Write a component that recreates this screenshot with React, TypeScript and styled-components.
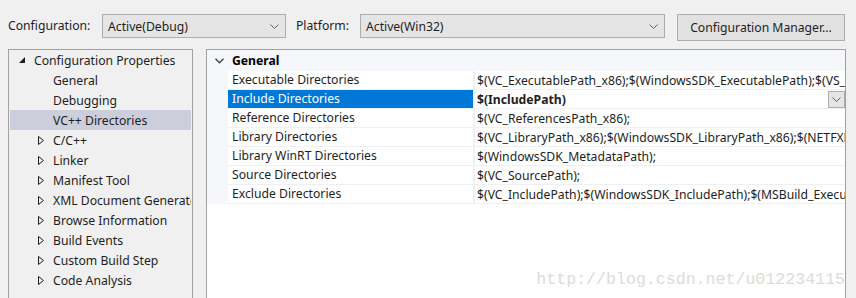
import styled, { createGlobalStyle } from "styled-components";

const GlobalStyle = createGlobalStyle`
  html, body {
    margin: 0;
    padding: 0;
    background: #f0f0f0;
    overflow: hidden;
  }
  body {
    font-family: "Noto Sans", "Liberation Sans", sans-serif;
    font-size: 12.2px;
    color: #1e1e1e;
  }
`;

interface TreeItem {
  label: string;
  level: 0 | 1;
  arrow?: "open" | "closed";
  selected?: boolean;
}

const treeItems: TreeItem[] = [
  { label: "Configuration Properties", level: 0, arrow: "open" },
  { label: "General", level: 1 },
  { label: "Debugging", level: 1 },
  { label: "VC++ Directories", level: 1, selected: true },
  { label: "C/C++", level: 1, arrow: "closed" },
  { label: "Linker", level: 1, arrow: "closed" },
  { label: "Manifest Tool", level: 1, arrow: "closed" },
  { label: "XML Document Generator", level: 1, arrow: "closed" },
  { label: "Browse Information", level: 1, arrow: "closed" },
  { label: "Build Events", level: 1, arrow: "closed" },
  { label: "Custom Build Step", level: 1, arrow: "closed" },
  { label: "Code Analysis", level: 1, arrow: "closed" },
];

const props = [
  {
    name: "Executable Directories",
    value:
      "$(VC_ExecutablePath_x86);$(WindowsSDK_ExecutablePath);$(VS_ExecutablePath);$(MSBuild_ExecutablePath)",
  },
  { name: "Include Directories", value: "$(IncludePath)", selected: true },
  { name: "Reference Directories", value: "$(VC_ReferencesPath_x86);" },
  {
    name: "Library Directories",
    value:
      "$(VC_LibraryPath_x86);$(WindowsSDK_LibraryPath_x86);$(NETFXKitsDir)Lib\\um\\x86",
  },
  { name: "Library WinRT Directories", value: "$(WindowsSDK_MetadataPath);" },
  { name: "Source Directories", value: "$(VC_SourcePath);" },
  {
    name: "Exclude Directories",
    value:
      "$(VC_IncludePath);$(WindowsSDK_IncludePath);$(MSBuild_ExecutablePath);$(VC_LibraryPath_x86)",
  },
];

const Chevron = () => (
  <svg width="9" height="5" viewBox="0 0 9 5">
    <polyline points="0.5,0.5 4.5,4.5 8.5,0.5" fill="none" stroke="#606060" strokeWidth="1" />
  </svg>
);

export default function App() {
  return (
    <>
      <GlobalStyle />
      <Page>
        <TopBar>
          <Label $width={94}>Configuration:</Label>
          <Combo $width={184}>
            <span>Active(Debug)</span>
            <Chevron />
          </Combo>
          <Label $width={64} $gap={10}>
            Platform:
          </Label>
          <Combo $width={305}>
            <span>Active(Win32)</span>
            <Chevron />
          </Combo>
          <ManagerButton>Configuration Manager...</ManagerButton>
        </TopBar>
        <Main>
          <Tree>
            {treeItems.map((item) => (
              <TreeRow key={item.label} $selected={item.selected}>
                <TreeArrow $level={item.level}>
                  {item.arrow === "open" && (
                    <svg width="6" height="6" viewBox="0 0 6 6">
                      <polygon points="6,0 6,6 0,6" fill="#1e1e1e" />
                    </svg>
                  )}
                  {item.arrow === "closed" && (
                    <svg width="6" height="9" viewBox="0 0 6 9">
                      <polygon points="0.5,0.5 5.5,4.5 0.5,8.5" fill="none" stroke="#1e1e1e" strokeWidth="1" />
                    </svg>
                  )}
                </TreeArrow>
                <TreeLabel>{item.label}</TreeLabel>
              </TreeRow>
            ))}
          </Tree>
          <Grid>
            <Section>
              <SectionHeader>
                <HeaderToggle>
                  <svg width="9" height="6" viewBox="0 0 9 6">
                    <polyline points="0.5,0.8 4.5,4.8 8.5,0.8" fill="none" stroke="#444" strokeWidth="1.4" />
                  </svg>
                </HeaderToggle>
                <HeaderTitle>General</HeaderTitle>
              </SectionHeader>
              {props.map((p) => (
                <PropRow key={p.name}>
                  <NameCell $selected={p.selected}>{p.name}</NameCell>
                  <ValueCell $bold={p.selected}>
                    <ValueText>{p.value}</ValueText>
                    {p.selected && (
                      <DropButton>
                        <Chevron />
                      </DropButton>
                    )}
                  </ValueCell>
                </PropRow>
              ))}
            </Section>
            <Watermark>http://blog.csdn.net/u012234115</Watermark>
          </Grid>
        </Main>
      </Page>
    </>
  );
}

const Page = styled.div`
  width: 856px;
  height: 298px;
  padding: 14px 0 0 8px;
  box-sizing: border-box;
`;

const TopBar = styled.div`
  display: flex;
  align-items: flex-start;
  height: 26px;
`;

const Label = styled.div<{ $width: number; $gap?: number }>`
  width: ${({ $width }) => $width}px;
  margin-left: ${({ $gap }) => $gap ?? 0}px;
  height: 24px;
  line-height: 24px;
`;

const Combo = styled.div<{ $width: number }>`
  width: ${({ $width }) => $width}px;
  height: 24px;
  box-sizing: border-box;
  border: 1px solid #adadad;
  background: #e5e5e5;
  display: flex;
  align-items: center;
  justify-content: space-between;
  padding: 0 6px 0 5px;
`;

const ManagerButton = styled.div`
  margin-left: 12px;
  width: 168px;
  height: 27px;
  box-sizing: border-box;
  border: 1px solid #adadad;
  background: #e1e1e1;
  display: flex;
  align-items: center;
  justify-content: center;
`;

const Main = styled.div`
  display: flex;
  gap: 13px;
  margin-top: 9px;
  height: 270px;
`;

const Tree = styled.div`
  width: 185px;
  box-sizing: border-box;
  border: 1px solid #a0a0a0;
  padding: 0 1px;
  background: #f0f0f0;
`;

const TreeRow = styled.div<{ $selected?: boolean }>`
  height: 20px;
  display: flex;
  align-items: center;
  background: ${({ $selected }) => ($selected ? "#cccedb" : "transparent")};
  white-space: nowrap;
  overflow: hidden;
`;

const TreeArrow = styled.span<{ $level: number }>`
  flex: none;
  width: 6px;
  margin-left: ${({ $level }) => ($level === 0 ? 9 : 28)}px;
  margin-right: 9px;
  display: flex;
  align-items: center;
`;

const TreeLabel = styled.span``;

const Grid = styled.div`
  position: relative;
  width: 640px;
  box-sizing: border-box;
  border: 1px solid #a0a0a0;
  background: #ffffff;
`;

const Section = styled.div`
  background: #f5f7fa;
  padding-left: 21px;
`;

const SectionHeader = styled.div`
  height: 21px;
  display: flex;
  align-items: center;
  margin-left: -21px;
`;

const HeaderToggle = styled.span`
  width: 25px;
  display: flex;
  justify-content: center;
`;

const HeaderTitle = styled.span`
  font-weight: 700;
  color: #000;
`;

const PropRow = styled.div`
  display: grid;
  grid-template-columns: 245px 1fr;
  column-gap: 2px;
  height: 19px;
  box-sizing: border-box;
  background: #eef0f4;
  border-bottom: 1px solid #eef0f4;
`;

const NameCell = styled.div<{ $selected?: boolean }>`
  background: ${({ $selected }) => ($selected ? "#0078d7" : "#ffffff")};
  color: ${({ $selected }) => ($selected ? "#ffffff" : "#1e1e1e")};
  padding-left: 4px;
  line-height: 18px;
  white-space: nowrap;
  overflow: hidden;
`;

const ValueCell = styled.div<{ $bold?: boolean }>`
  background: #ffffff;
  display: flex;
  align-items: center;
  font-weight: ${({ $bold }) => ($bold ? 700 : 400)};
  overflow: hidden;
`;

const ValueText = styled.span`
  flex: 1;
  padding-left: 2px;
  white-space: nowrap;
  overflow: hidden;
`;

const DropButton = styled.span`
  width: 17px;
  height: 17px;
  box-sizing: border-box;
  border: 1px solid #adadad;
  background: #e5e5e5;
  display: flex;
  align-items: center;
  justify-content: center;
`;

const Watermark = styled.div`
  position: absolute;
  right: 0;
  top: 220px;
  font-family: "Liberation Mono", monospace;
  font-size: 16.6px;
  color: #dcdcd8;
  pointer-events: none;
`;
